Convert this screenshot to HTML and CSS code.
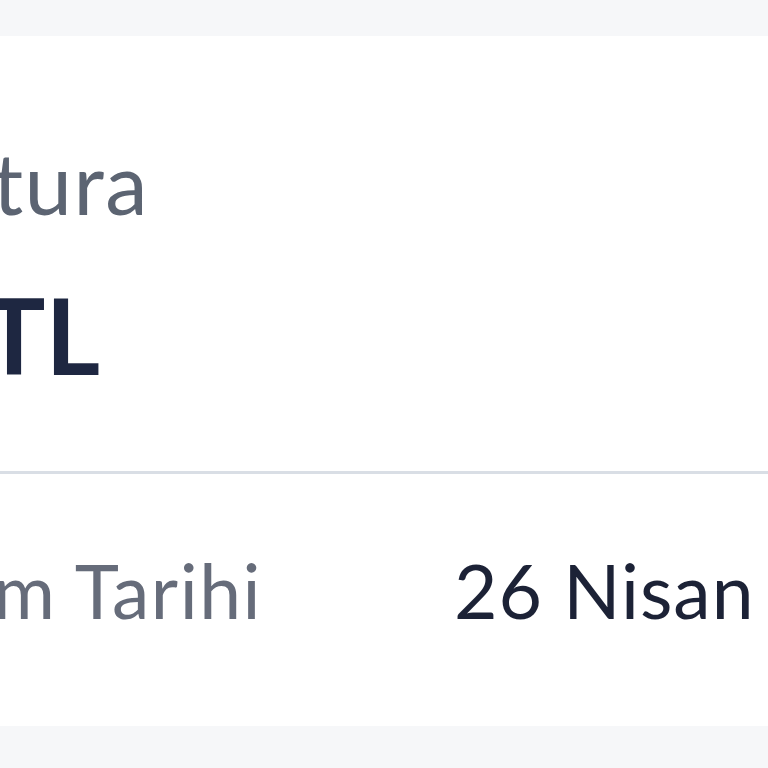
FILE: index.html
```html
<!DOCTYPE html>
<html lang="tr">
<head>
<meta charset="utf-8">
<title>Fatura</title>
<link rel="stylesheet" href="styles.css">
</head>
<body>
<div class="page">
  <section class="card">
    <div class="summary">
      <div class="label">Fatura</div>
      <div class="amount">245,90 TL</div>
    </div>
    <div class="details">
      <div class="row">
        <span class="row-label">Fatura Kesim Tarihi</span>
        <span class="row-value">26 Nisan 2024</span>
      </div>
    </div>
  </section>
</div>
</body>
</html>
```
FILE: styles.css
```css
html, body {
  margin: 0;
  padding: 0;
}
body {
  width: 768px;
  height: 768px;
  overflow: hidden;
  background: #f6f7f9;
  font-family: Lato, "Noto Sans", sans-serif;
}
.page {
  padding-top: 36px;
  width: 768px;
  overflow: hidden;
}
.card {
  background: #ffffff;
  height: 690px;
  width: 768px;
  overflow: hidden;
}
.summary {
  padding: 104px 0 84px 0;
  border-bottom: 3px solid #d9dee5;
  white-space: nowrap;
}
.label {
  display: flex;
  justify-content: flex-end;
  width: 149px;
  font-size: 85px;
  line-height: 1;
  letter-spacing: 1.5px;
  color: #5c6472;
  margin-bottom: 57px;
}
.amount {
  display: flex;
  justify-content: flex-end;
  width: 100px;
  font-size: 105px;
  line-height: 1;
  font-weight: 700;
  color: #1e2741;
}
.details {
  padding-top: 79px;
  white-space: nowrap;
}
.row {
  display: grid;
  grid-template-columns: 262px auto;
  column-gap: 192px;
  align-items: baseline;
}
.row-label {
  display: flex;
  justify-content: flex-end;
  font-size: 75px;
  line-height: 1;
  letter-spacing: 1.5px;
  color: #666c7a;
}
.row-value {
  font-size: 75px;
  line-height: 1;
  letter-spacing: 1px;
  color: #1c2236;
}
```
